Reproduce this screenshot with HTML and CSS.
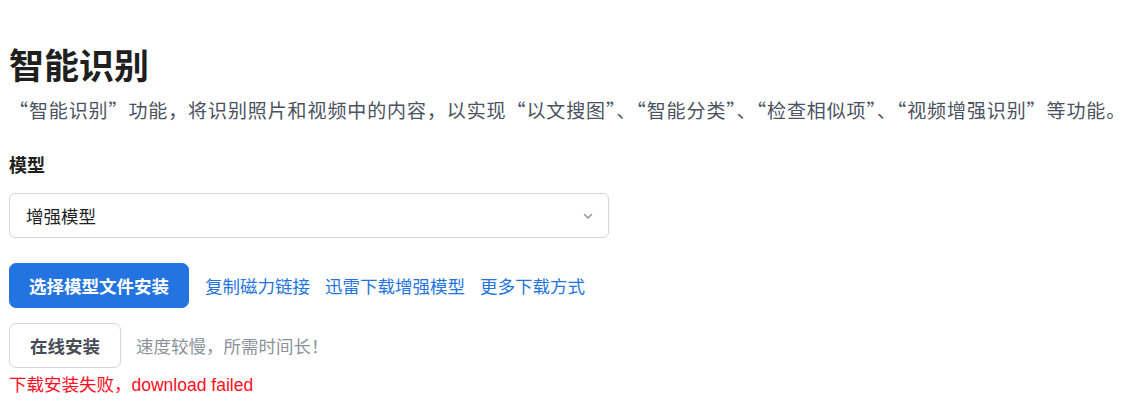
FILE: index.html
```html
<!DOCTYPE html>
<html lang="zh-CN">
<head>
<meta charset="utf-8">
<link rel="stylesheet" href="styles.css">
</head>
<body>
<main class="page">
  <h1 class="title">智能识别</h1>
  <p class="desc">“智能识别”功能，将识别照片和视频中的内容，以实现“以文搜图”、“智能分类”、“检查相似项”、“视频增强识别”等功能。</p>
  <h2 class="label">模型</h2>
  <div class="select">
    <span class="select-value">增强模型</span>
    <svg class="chevron" width="12" height="12" viewBox="0 0 12 12"><path d="M2.5 4.5 6 8l3.5-3.5" fill="none" stroke="#8a94a6" stroke-width="1.5" stroke-linecap="round" stroke-linejoin="round"/></svg>
  </div>
  <div class="row row-primary">
    <button class="btn btn-primary">选择模型文件安装</button>
    <a class="link">复制磁力链接</a>
    <a class="link">迅雷下载增强模型</a>
    <a class="link">更多下载方式</a>
  </div>
  <div class="row row-secondary">
    <button class="btn btn-outline">在线安装</button>
    <span class="hint">速度较慢，所需时间长！</span>
  </div>
  <p class="error">下载安装失败，download failed</p>
</main>
</body>
</html>
```
FILE: styles.css
```css
* { box-sizing: border-box; }
html, body { margin: 0; padding: 0; background: #fff; }
body {
  font-family: "Noto Sans CJK SC", "Noto Sans", sans-serif;
  color: #1f2328;
}
.page { padding: 40px 9px 0 9px; }
.title {
  margin: 0;
  font-size: 35px;
  line-height: 48px;
  font-weight: 700;
  color: #1f1f1f;
}
.desc {
  margin: 8px 0 0 0;
  font-size: 19px;
  letter-spacing: 0.9px;
  line-height: 28px;
  color: #4a5261;
  white-space: nowrap;
}
.label {
  margin: 27px 0 0 0;
  font-size: 18px;
  line-height: 26px;
  font-weight: 700;
  color: #1f1f1f;
}
.select {
  margin-top: 16px;
  width: 600px;
  height: 45px;
  border: 1px solid #d0d6de;
  border-radius: 6px;
  display: flex;
  align-items: center;
  justify-content: space-between;
  padding: 0 14px 0 16px;
}
.select-value { font-size: 17.5px; color: #1f1f1f; }
.row { display: flex; align-items: center; }
.row-primary { margin-top: 25px; gap: 15px; }
.row-secondary { margin-top: 15px; gap: 15px; }
.btn {
  font-family: inherit;
  height: 45px;
  border-radius: 7px;
  font-size: 17.5px;
  font-weight: 700;
  padding: 0 19px;
  cursor: pointer;
}
.btn-primary {
  background: #2374e1;
  color: #fff;
  border: 1px solid #2374e1;
  margin-right: 1px;
}
.btn-outline {
  background: #fff;
  color: #474c55;
  border: 1px solid #d0d6de;
  padding: 0 20px;
}
.link {
  font-size: 17.5px;
  color: #2374e1;
  cursor: pointer;
}
.hint { font-size: 17.5px; color: #8b929c; }
.error {
  margin: 5px 0 0 0;
  font-family: "Liberation Sans", "Noto Sans CJK SC", sans-serif;
  font-size: 17.5px;
  line-height: 24px;
  color: #ff0d22;
}
```
